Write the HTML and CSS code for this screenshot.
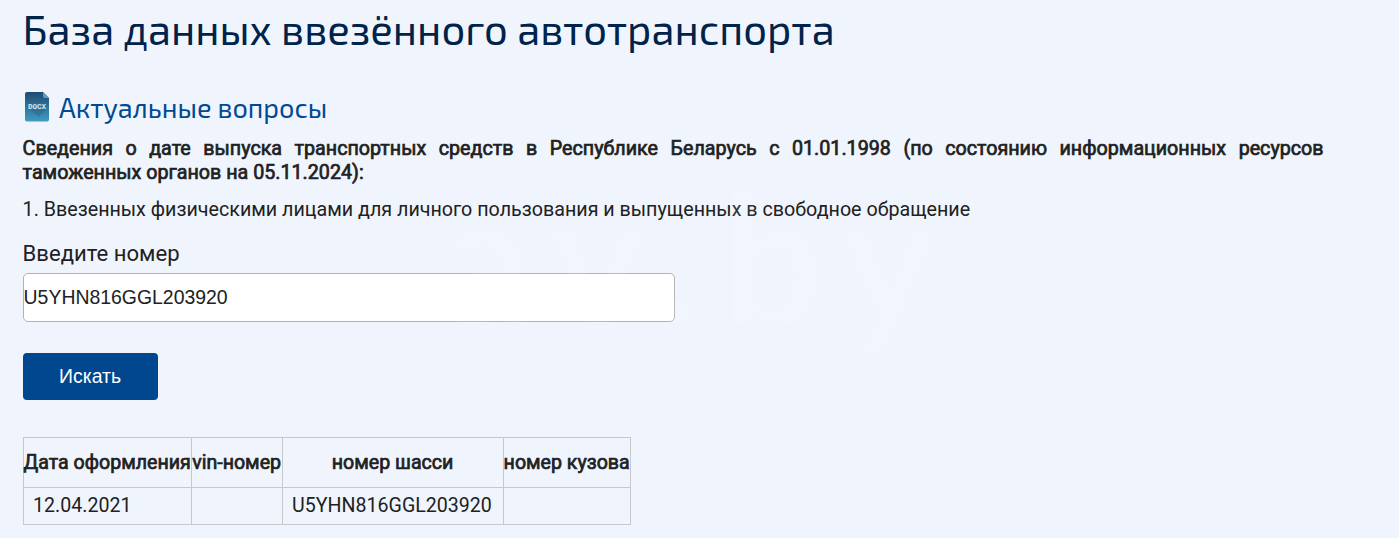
FILE: index.html
```
<!DOCTYPE html>
<html lang="ru">
<head>
    <meta charset="utf-8">
    <link rel="stylesheet" href="styles.css">
    <title>База данных ввезённого автотранспорта</title>
</head>
<body>
<div class="content">
    <h1>База данных ввезённого автотранспорта</h1>

    <a class="doc-link">
        <svg class="doc-icon" width="25" height="30" viewBox="0 0 25 30">
            <defs>
                <linearGradient id="docFill" x1="0" y1="0" x2="0" y2="1">
                    <stop offset="0" stop-color="#1f4a72"/>
                    <stop offset="1" stop-color="#3f9cc2"/>
                </linearGradient>
            </defs>
            <path d="M2 0H18L24 6V27.500Q24 29.500 22 29.500H2Q0 29.500 0 27.500V2Q0 0 2 0Z" fill="url(#docFill)"/>
            <path d="M21 17L14 25L5 18Z" fill="#1f4a72" opacity="0.25"/>
            <path d="M18 0L24 6H20Q18 6 18 4Z" fill="#5b9fc4"/>
            <text x="12" y="17" text-anchor="middle" textLength="18" lengthAdjust="spacingAndGlyphs" class="doc-type">DOCX</text>
        </svg>
        <span>Актуальные вопросы</span>
    </a>

    <p class="info">Сведения о дате выпуска транспортных средств в Республике Беларусь с 01.01.1998 (по состоянию информационных ресурсов таможенных органов на 05.11.2024):</p>
    <p class="item">1. Ввезенных физическими лицами для личного пользования и выпущенных в свободное обращение</p>

    <form class="search">
        <label for="number">Введите номер</label>
        <input type="text" id="number" value="U5YHN816GGL203920">
        <button type="button">Искать</button>
    </form>

    <table class="result">
        <colgroup>
            <col class="col-date">
            <col class="col-vin">
            <col class="col-chassis">
            <col class="col-body">
        </colgroup>
        <tr>
            <th>Дата оформления</th>
            <th>vin-номер</th>
            <th>номер шасси</th>
            <th>номер кузова</th>
        </tr>
        <tr>
            <td>12.04.2021</td>
            <td></td>
            <td>U5YHN816GGL203920</td>
            <td></td>
        </tr>
    </table>
</div>
<div class="watermark">av.by</div>
</body>
</html>
```
FILE: styles.css
```
body {
    margin: 0;
    background-color: #f0f5fd;
    color: #212121;
    font-family: Roboto, Arial, sans-serif;
    font-size: 19.7px;
    line-height: 25px;
    overflow: hidden;
}

.content {
    width: 1301px;
    padding: 3px 0 0 22.6px;
}

h1 {
    margin: 0;
    color: #00234b;
    font-family: "Exo 2", "Open Sans", sans-serif;
    font-size: 41.7px;
    font-weight: 400;
    line-height: 50px;
}

.doc-link {
    display: flex;
    align-items: flex-start;
    gap: 9px;
    margin-top: 39px;
    padding-left: 2.4px;
    height: 38px;
    color: #004a93;
    font-family: "Exo 2", "Open Sans", sans-serif;
    font-size: 27px;
    line-height: 31px;
}

.doc-type {
    fill: #d5e6f0;
    font-family: "Liberation Mono", monospace;
    font-size: 8px;
    font-weight: bold;
}

p {
    margin: 0;
}

/* bold drawn as a thickened regular */
.info,
.result th {
    font-weight: 400;
    -webkit-text-stroke: 0.7px #212121;
}

.info {
    padding-top: 7px;
    line-height: 24px;
    text-align: justify;
}

.item {
    margin-top: 12px;
}

.search {
    display: flex;
    flex-direction: column;
    align-items: flex-start;
    margin-top: 17px;
}

.search label {
    font-size: 22.1px;
    line-height: 28px;
}

.search input {
    box-sizing: border-box;
    width: 652px;
    height: 49px;
    margin-top: 6px;
    padding: 0;
    border: 1px solid #b3b3b3;
    border-radius: 5px;
    background: #fff;
    color: #212121;
    font-family: "Liberation Sans", Arial, sans-serif;
    font-size: 19.43px;
}

.search button {
    width: 135px;
    height: 47px;
    margin-top: 31px;
    padding: 0;
    border: none;
    border-radius: 4px;
    background: #00478f;
    color: #fff;
    font-family: "Liberation Sans", Arial, sans-serif;
    font-size: 19.43px;
}

.result {
    width: 608px;
    margin-top: 37px;
    table-layout: fixed;
    border-collapse: collapse;
    font-size: 19.6px;
}

.result th,
.result td {
    border: 1px solid #c6c8cc;
    white-space: nowrap;
}

.result th {
    height: 49px;
    padding: 0;
    text-align: center;
}

.result td {
    height: 37px;
    padding: 0 0 1px 9.5px;
    box-sizing: border-box;
}

.col-date {
    width: 168px;
}

.col-vin {
    width: 91px;
}

.col-chassis {
    width: 221px;
}

.col-body {
    width: 127px;
}

.watermark {
    position: absolute;
    left: 440px;
    top: 154px;
    color: rgba(255, 255, 255, 0.08);
    font-family: Lato, sans-serif;
    font-size: 182px;
    font-weight: 700;
    letter-spacing: 19px;
    line-height: 200px;
    pointer-events: none;
}
```
